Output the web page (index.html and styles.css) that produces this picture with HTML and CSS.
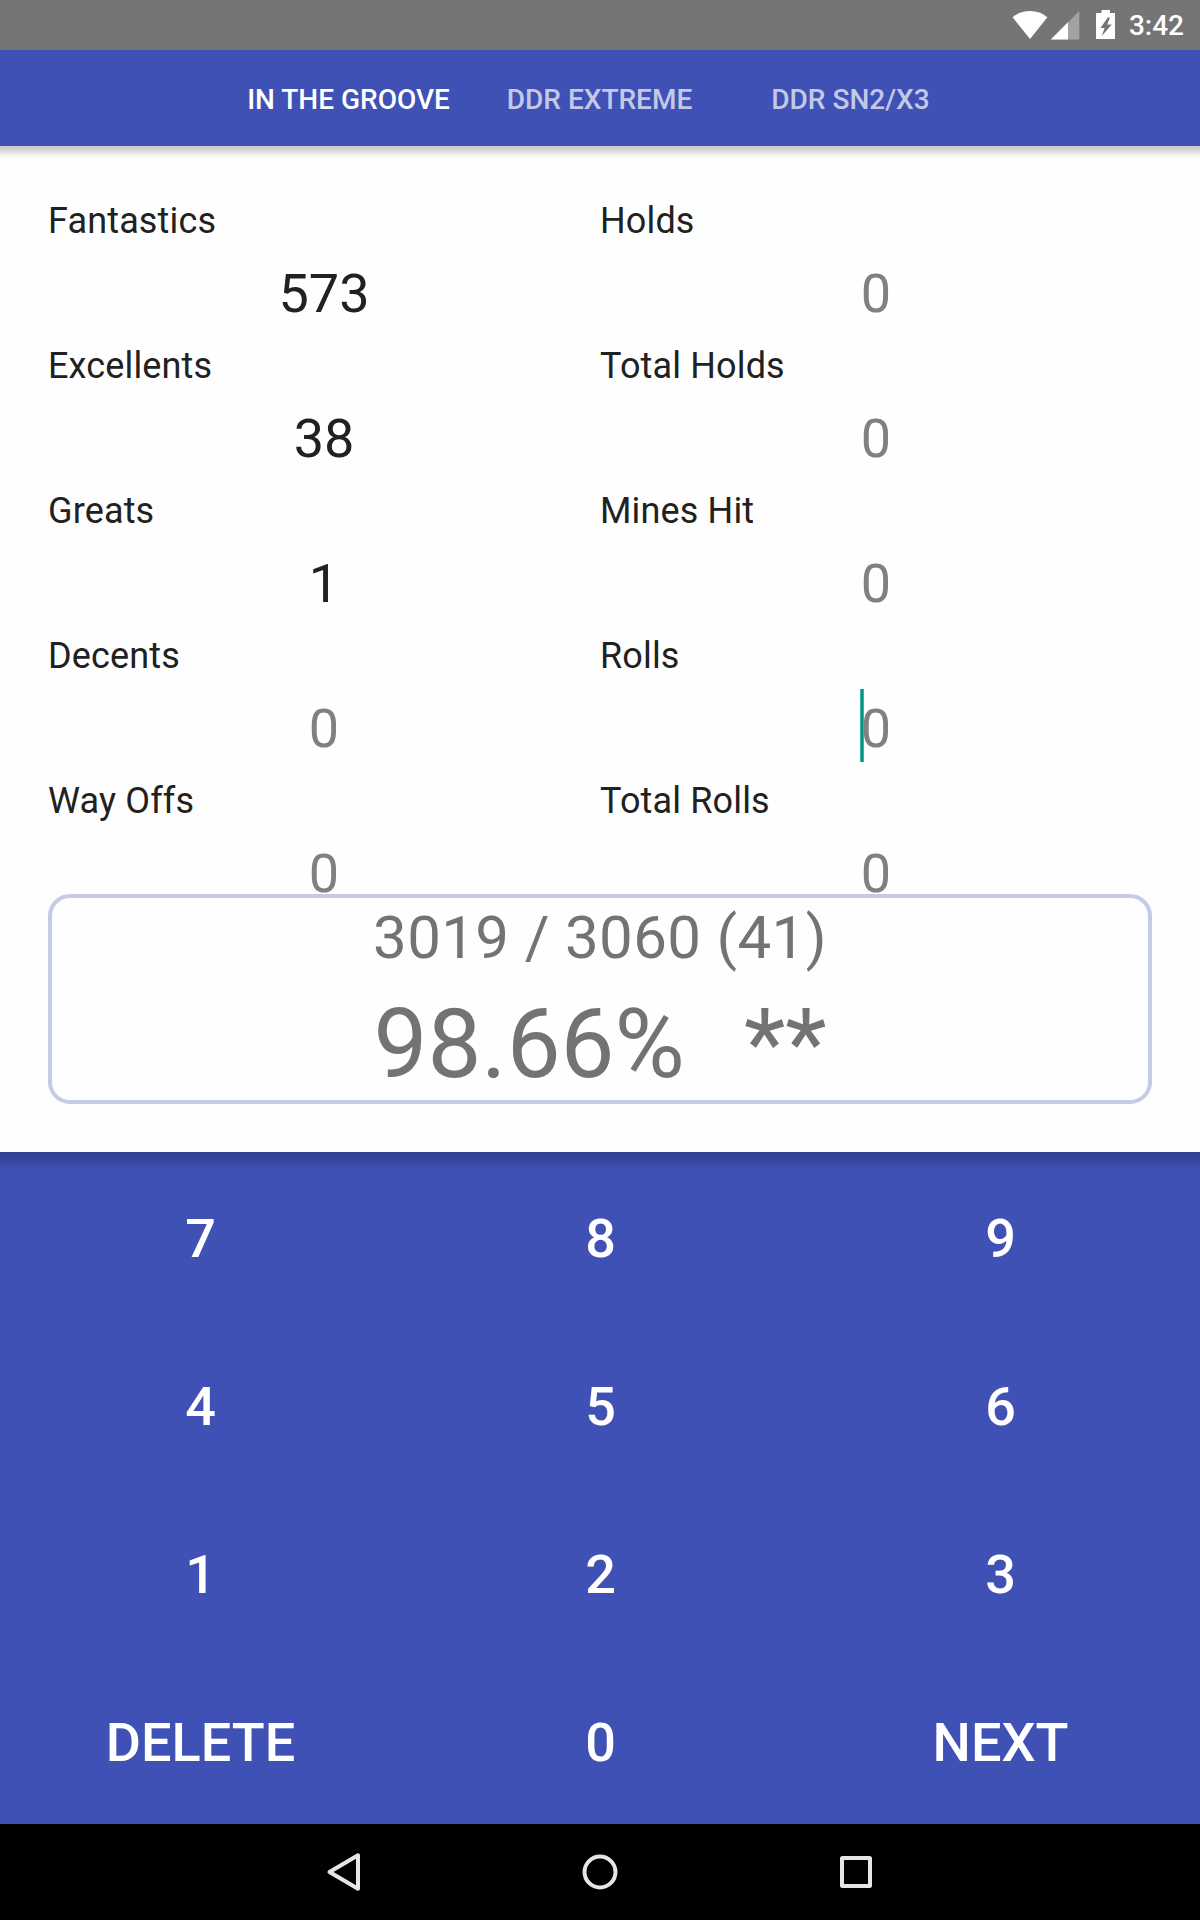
FILE: index.html
```html
<!DOCTYPE html>
<html lang="en">
<head>
<meta charset="utf-8">
<title>Score Calculator</title>
<link rel="stylesheet" href="styles.css">
</head>
<body>
<div class="screen">
  <header class="status">
    <svg class="status-icons" width="104" height="50" viewBox="1012 0 104 50">
      <path fill="#fff" d="M1030 39 L1012.600 17.200 Q1020 11 1030 11 T1047.400 17.200 Z"/>
      <path fill="#fff" fill-opacity=".33" d="M1079.300 11V39.500H1050.800Z"/>
      <path fill="#fff" d="M1068 22.300V39.500H1050.800Z"/>
      <path fill="#fff" fill-rule="evenodd" d="M1101.500 10h8.500v3h5v26h-19v-26h5.500ZM1107.800 17.500L1100.500 28H1104.600L1101.800 36L1111.800 24.400H1107.300L1110 17.500Z"/>
    </svg>
    <span class="clock">3:42</span>
  </header>

  <nav class="tabs">
    <div class="tab tab-active">IN THE GROOVE</div>
    <div class="tab">DDR EXTREME</div>
    <div class="tab">DDR SN2/X3</div>
  </nav>

  <main class="content">
    <div class="fields">
      <div class="column">
        <div class="label">Fantastics</div><div class="value">573</div>
        <div class="label">Excellents</div><div class="value">38</div>
        <div class="label">Greats</div><div class="value">1</div>
        <div class="label">Decents</div><div class="value hint">0</div>
        <div class="label">Way Offs</div><div class="value hint">0</div>
      </div>
      <div class="column">
        <div class="label">Holds</div><div class="value hint">0</div>
        <div class="label">Total Holds</div><div class="value hint">0</div>
        <div class="label">Mines Hit</div><div class="value hint">0</div>
        <div class="label">Rolls</div><div class="value hint"><span class="focused">0</span></div>
        <div class="label">Total Rolls</div><div class="value hint">0</div>
      </div>
    </div>
    <section class="result">
      <div class="points">3019 / 3060 (41)</div>
      <div class="grade"><span>98.66%</span><span>**</span></div>
    </section>
  </main>

  <section class="keypad">
    <div class="key">7</div><div class="key">8</div><div class="key">9</div>
    <div class="key">4</div><div class="key">5</div><div class="key">6</div>
    <div class="key">1</div><div class="key">2</div><div class="key">3</div>
    <div class="key">DELETE</div><div class="key">0</div><div class="key">NEXT</div>
  </section>

  <footer class="navbar">
    <svg class="nav-icon" viewBox="0 0 48 48"><path d="M38 7.300V40.700L9.500 24Z"/></svg>
    <svg class="nav-icon" viewBox="0 0 48 48"><circle cx="24" cy="24" r="15.500"/></svg>
    <svg class="nav-icon" viewBox="0 0 48 48"><rect x="10" y="10" width="28" height="28" rx=".5"/></svg>
  </footer>
</div>
</body>
</html>
```
FILE: styles.css
```css
* { box-sizing: border-box; }

body {
  margin: 0;
  font-family: Roboto, "Liberation Sans", sans-serif;
  color: #212121;
}

.screen {
  display: flex;
  flex-direction: column;
  width: 1200px;
  height: 1920px;
  overflow: hidden;
  background: #fefefe;
}

.status {
  display: flex;
  align-items: center;
  justify-content: flex-end;
  gap: 13px;
  height: 50px;
  padding-right: 16px;
  background: #757575;
}

.clock {
  padding-top: 1px;
  color: #fff;
  font-size: 28px;
  font-weight: 500;
}

.tabs {
  display: grid;
  grid-template-columns: repeat(3, 251px);
  justify-content: center;
  height: 96px;
  padding-right: 1px;
  background: #3f51b5;
}

.tab {
  padding-top: 4px;
  border-bottom: 4px solid transparent;
  color: rgba(255, 255, 255, .7);
  font-size: 28px;
  font-weight: 500;
  line-height: 92px;
  text-align: center;
  white-space: nowrap;
}

.tab-active {
  border-bottom-color: #009688;
  color: #fff;
}

.content {
  height: 1006px;
  padding: 54px 48px 48px;
  background: linear-gradient(#c8c8c8, #d4d4d4 4px, #f2f2f2 9px, #fefefe 13px);
}

.fields {
  display: grid;
  grid-template-columns: 1fr 1fr;
  height: 694px;
}

.label {
  height: 43px;
  font-size: 36px;
  letter-spacing: .15px;
  line-height: 43px;
}

.value {
  height: 102px;
  font-size: 54px;
  line-height: 102px;
  text-align: center;
}

.hint { color: #808080; }

.focused {
  position: relative;
}

.focused::before {
  content: "";
  position: absolute;
  left: -1px;
  top: -8px;
  width: 4px;
  height: 73px;
  background: linear-gradient(90deg, #40b0a6 1px, #009688 1px, #009688 3px, #40b0a6 3px);
}

.result {
  height: 210px;
  padding-top: 4px;
  border: 4px solid #c5cae9;
  border-radius: 22px;
  color: #737373;
  text-align: center;
}

.points {
  font-size: 60px;
  letter-spacing: .36px;
  line-height: 71px;
}

.grade {
  display: flex;
  justify-content: center;
  gap: 59px;
  padding-top: 14px;
  font-size: 96px;
  line-height: 114px;
}

.keypad {
  display: grid;
  grid-template-columns: repeat(3, 1fr);
  grid-template-rows: repeat(4, 168px);
  background: linear-gradient(#344193, #36449b 8px, #3d4eaf 15px, #3f51b5 19px);
}

.key {
  padding: 5px 0 0 1px;
  color: #fff;
  font-size: 54px;
  font-weight: 500;
  line-height: 163px;
  text-align: center;
}

.navbar {
  display: grid;
  grid-template-columns: repeat(3, 256px);
  place-content: center;
  justify-items: center;
  height: 96px;
  background: #000;
}

.nav-icon {
  width: 48px;
  height: 48px;
  fill: none;
  stroke: #e6e6e6;
  stroke-width: 4;
  stroke-linejoin: round;
}
```
